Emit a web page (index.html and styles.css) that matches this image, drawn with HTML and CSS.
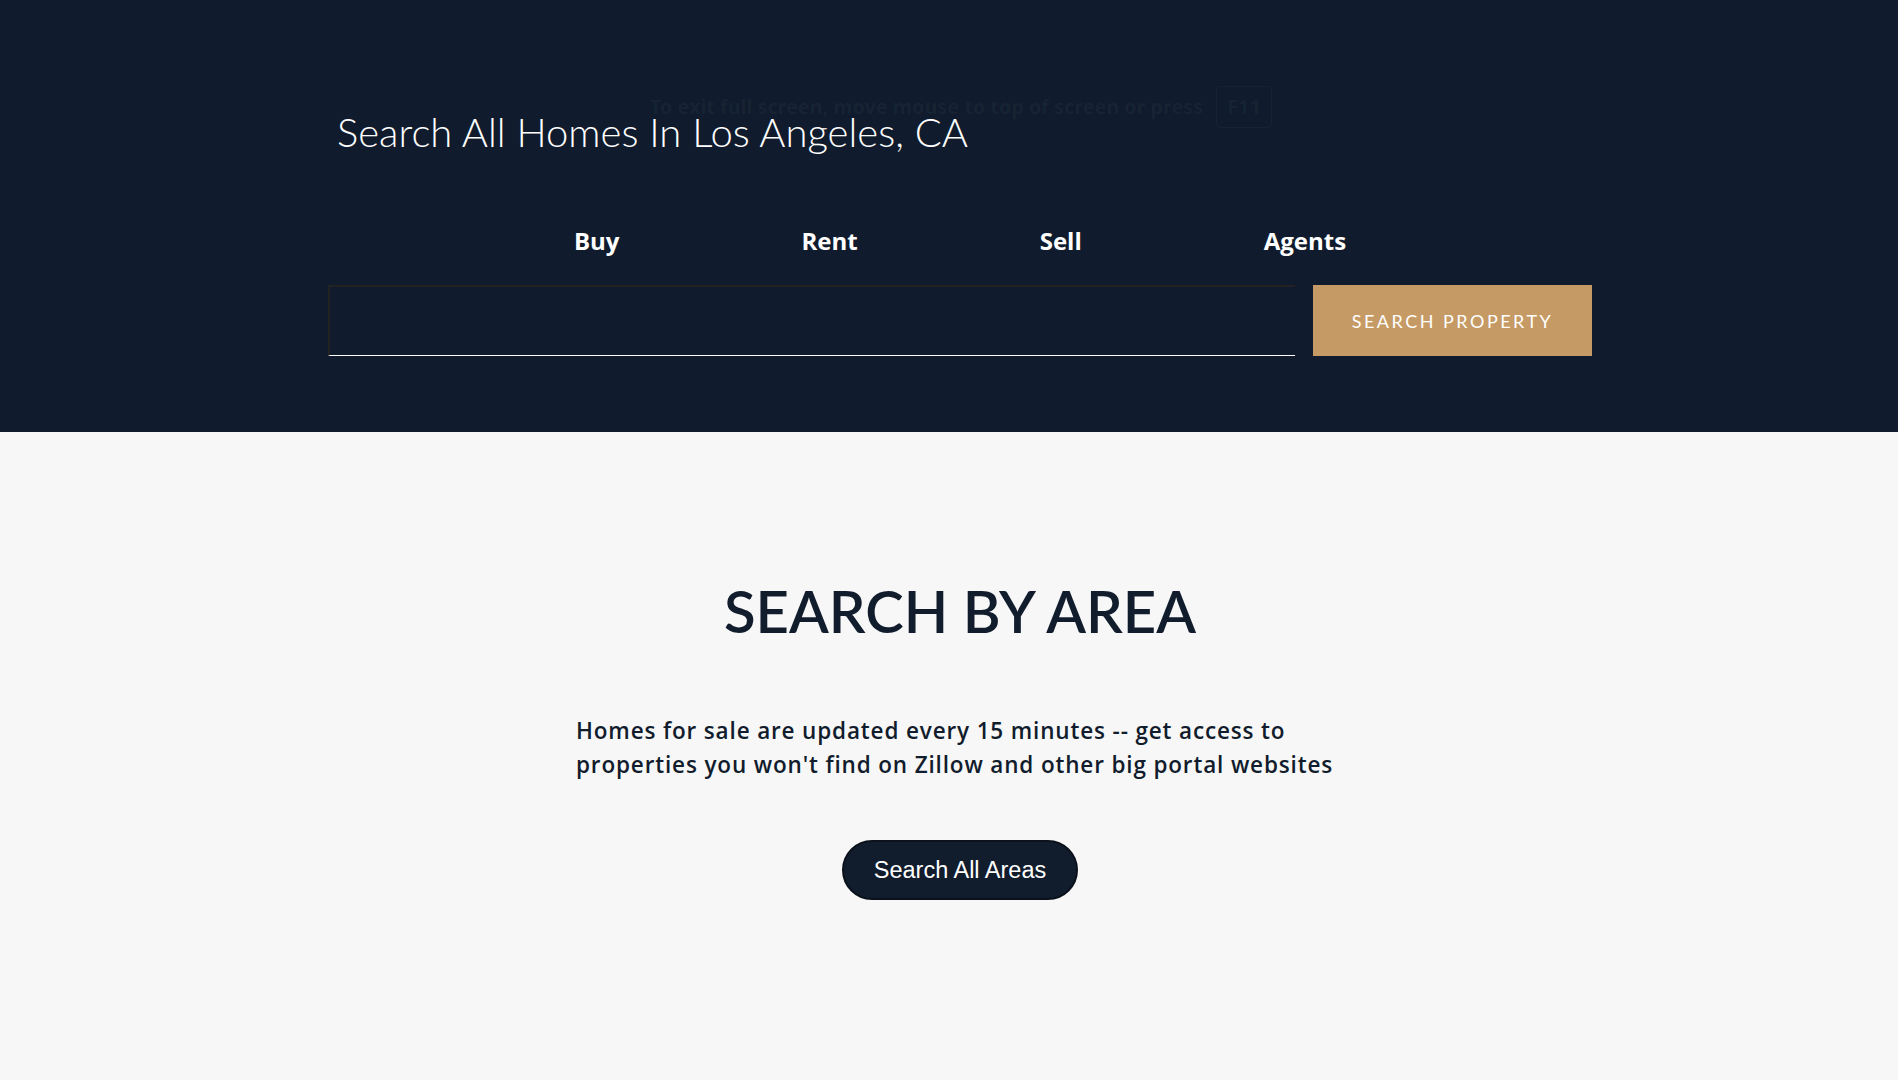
FILE: index.html
```html
<!DOCTYPE html>
<html lang="en">
<head>
<meta charset="utf-8">
<title>Search All Homes In Los Angeles, CA</title>
<link rel="stylesheet" href="styles.css">
</head>
<body>
<section class="hero">
  <div class="fs-note"><span class="fs-text">To exit full screen, move mouse to top of screen or press</span><span class="fs-key">F11</span></div>
  <div class="wrap">
    <h1 class="hero-title">Search All Homes In Los Angeles, CA</h1>
    <nav class="tabs">
      <a class="tab">Buy</a>
      <a class="tab">Rent</a>
      <a class="tab">Sell</a>
      <a class="tab">Agents</a>
    </nav>
    <form class="search">
      <input class="search-input" type="text" aria-label="Search">
      <button class="search-btn" type="button">SEARCH PROPERTY</button>
    </form>
  </div>
</section>
<section class="area">
  <div class="wrap area-inner">
    <h2 class="area-title">SEARCH BY AREA</h2>
    <p class="area-text">Homes for sale are updated every 15 minutes -- get access to properties you won't find on Zillow and other big portal websites</p>
    <a class="area-btn">Search All Areas</a>
  </div>
</section>
</body>
</html>
```
FILE: styles.css
```css
* { box-sizing: border-box; }
html, body { margin: 0; padding: 0; }
body {
  background: #f7f7f7;
  font-family: "Lato", "Noto Sans", sans-serif;
  color: #111c2d;
}
.wrap {
  width: 1264px;
  margin-left: 328px;
}
.hero {
  background: #101c2d;
  height: 432px;
  padding-top: 119px;
  position: relative;
}
.fs-note {
  position: absolute;
  left: 636px;
  top: 78px;
  height: 58px;
  display: flex;
  align-items: center;
  gap: 13px;
  padding: 0 14px;
  color: rgba(255,255,255,0.04);
  font-family: "Noto Sans", sans-serif;
  font-weight: 700;
  font-size: 19.8px;
  line-height: 1;
}
.fs-key {
  border: 1px solid rgba(255,255,255,0.03);
  border-radius: 4px;
  padding: 10px 10px;
}
.hero-title {
  margin: 0;
  padding-left: 9px;
  font-weight: 300;
  font-size: 40px;
  line-height: 26px;
  color: #ffffff;
}
.tabs {
  display: flex;
  justify-content: center;
  gap: 182px;
  margin-top: 81px;
  height: 30px;
  align-items: center;
}
.tab {
  color: #ffffff;
  font-family: "Open Sans", sans-serif;
  font-weight: 700;
  font-size: 24px;
  line-height: 30px;
}
.search {
  display: flex;
  gap: 18px;
  margin-top: 29px;
}
.search-input {
  width: 967px;
  height: 71px;
  background: transparent;
  border: 0;
  border-top: 2px solid #222222;
  border-left: 2px solid #222222;
  border-bottom: 1px solid #ffffff;
  outline: none;
  margin: 0;
}
.search-btn {
  width: 279px;
  height: 71px;
  background: #c69a64;
  border: 0;
  margin: 0;
  color: #ffffff;
  font-family: "Lato", sans-serif;
  font-size: 18px;
  letter-spacing: 2.5px;
}
.area-inner {
  display: flex;
  flex-direction: column;
  align-items: center;
  padding-top: 144px;
}
.area-title {
  margin: 0;
  font-size: 58px;
  line-height: 70px;
  font-weight: 600;
  color: #111c2d;
}
.area-text {
  align-self: flex-start;
  width: 772px;
  margin: 68px 0 0 248px;
  font-family: "Open Sans", sans-serif;
  font-size: 22.5px;
  line-height: 34px;
  font-weight: 600;
  letter-spacing: 0.85px;
  color: #111c2d;
}
.area-btn {
  margin-top: 58px;
  width: 236px;
  height: 60px;
  border-radius: 30px;
  border: 2px solid #0b121c;
  background: #111c2d;
  color: #ffffff;
  font-family: "Liberation Sans", Arial, sans-serif;
  font-size: 23.5px;
  display: flex;
  align-items: center;
  justify-content: center;
}
```
